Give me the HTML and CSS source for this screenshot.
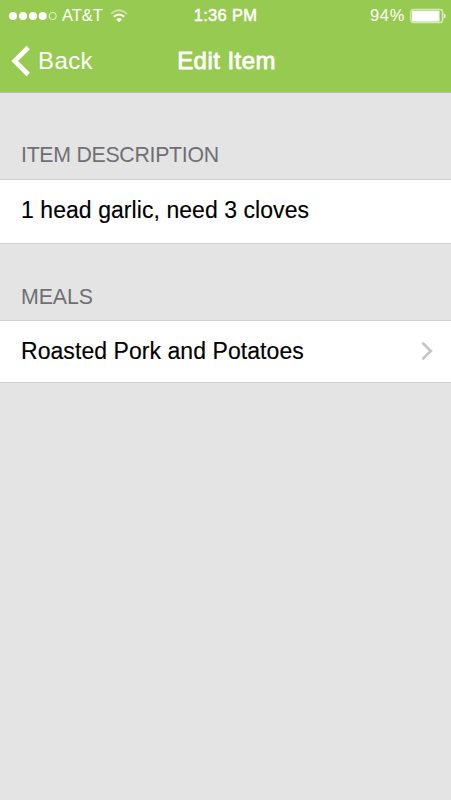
FILE: index.html
```html
<!DOCTYPE html>
<html lang="en">
<head>
<meta charset="utf-8">
<title>Edit Item</title>
<link rel="stylesheet" href="styles.css">
</head>
<body>
<header class="header">
  <div class="status">
    <div class="status-left">
      <svg class="signal" width="48" height="10" viewBox="0 0 48 10">
        <g fill="#fff"><circle cx="4" cy="5" r="4"/><circle cx="14" cy="5" r="4"/><circle cx="24" cy="5" r="4"/><circle cx="33.7" cy="5" r="4"/></g>
        <circle cx="43.7" cy="5" r="3.6" fill="none" stroke="#fff" stroke-width=".8"/>
      </svg>
      <span class="carrier">AT&amp;T</span>
      <svg class="wifi" width="18" height="14" viewBox="0 0 18 14" fill="none" stroke="#fff">
        <path d="M1 4.7Q9-2.1 17 4.7" stroke-width="1.8" opacity=".5"/>
        <path d="M3.8 7.8Q9 3.2 14.2 7.8" stroke-width="2.1"/>
        <path d="M6.1 10.4Q9 7.6 11.9 10.4L9 13.2Z" fill="#fff" stroke="none"/>
      </svg>
    </div>
    <span class="time">1:36 PM</span>
    <div class="status-right">
      <span class="percent">94%</span>
      <svg class="battery" width="36" height="16" viewBox="0 0 36 16">
        <rect x=".8" y="1.5" width="31.8" height="13" rx="2.4" fill="none" stroke="#d5ebb8" stroke-width="1.4"/>
        <rect x="2" y="2.7" width="27.5" height="10.7" rx="1" fill="#fff"/>
        <path d="M33.7 5.6Q35.6 6 35.6 8T33.7 10.4Z" fill="#fff"/>
      </svg>
    </div>
  </div>
  <nav class="nav">
    <a class="back">
      <svg class="back-icon" width="19" height="32" viewBox="0 0 19 32"><path d="M17.2 2.5L3.7 16L17.2 29.5" fill="none" stroke="#fff" stroke-width="4.6"/></svg>
      <span>Back</span>
    </a>
    <h1 class="title">Edit Item</h1>
  </nav>
</header>
<main>
  <section>
    <h2 class="label label-description">ITEM DESCRIPTION</h2>
    <div class="row row-description">1 head garlic, need 3 cloves</div>
  </section>
  <section>
    <h2 class="label label-meals">MEALS</h2>
    <div class="row row-meal">
      <span>Roasted Pork and Potatoes</span>
      <svg class="chevron" width="12" height="20" viewBox="0 0 12 20"><path d="M1.4 1.8L9.8 10L1.4 18.2" fill="none" stroke="#c5c5ca" stroke-width="2.7"/></svg>
    </div>
  </section>
</main>
</body>
</html>
```
FILE: styles.css
```css
* { box-sizing: border-box; }
body {
  margin: 0;
  min-height: 800px;
  background: #e4e4e4;
  color: #000;
  font-family: "Liberation Sans", Arial, sans-serif;
}
svg { display: block; flex: none; }
.header {
  height: 93px;
  background: #97ca50;
  border-bottom: 1px solid #b4b9ad;
  color: #fff;
}
.status {
  display: grid;
  grid-template-columns: 1fr auto 1fr;
  height: 31px;
  padding: 0 5px 0 9px;
  font-size: 16.5px;
  line-height: 31px;
}
.status-left, .status-right { display: flex; align-items: center; }
.status-right { justify-content: flex-end; }
.carrier { margin-left: 5px; }
.wifi { margin-left: 7px; }
.time { margin: 0 2px 0 -2px; letter-spacing: .3px; -webkit-text-stroke: .5px #fff; }
.percent { letter-spacing: .7px; }
.battery { margin-left: 5px; }
.nav {
  display: grid;
  grid-template-columns: 1fr auto 1fr;
  height: 61px;
  padding: 0 9px 0 11px;
  font-size: 24px;
  line-height: 60px;
}
.back { display: flex; letter-spacing: .4px; }
.back-icon { margin: 14px 8px 0 0; }
.title {
  margin: 0;
  font-size: 24px;
  font-weight: 400;
  letter-spacing: .45px;
  -webkit-text-stroke: .8px #fff;
}
.label {
  margin: 0;
  padding-left: 21px;
  color: #6f6f74;
  font-size: 21.3px;
  font-weight: 400;
  line-height: 26px;
}
.label-description { height: 86px; padding-top: 49px; letter-spacing: -.28px; }
.label-meals { height: 76px; padding-top: 40px; letter-spacing: -.05px; }
.row {
  display: flex;
  align-items: center;
  justify-content: space-between;
  padding: 0 18px 0 21px;
  background: #fff;
  border: solid #d0d0d2;
  border-width: 1px 0;
  font-size: 23px;
  letter-spacing: .06px;
  -webkit-text-stroke: .15px #000;
}
.row-description { height: 65px; padding-bottom: 2px; }
.row-meal { height: 63px; padding-bottom: 1px; }
```
